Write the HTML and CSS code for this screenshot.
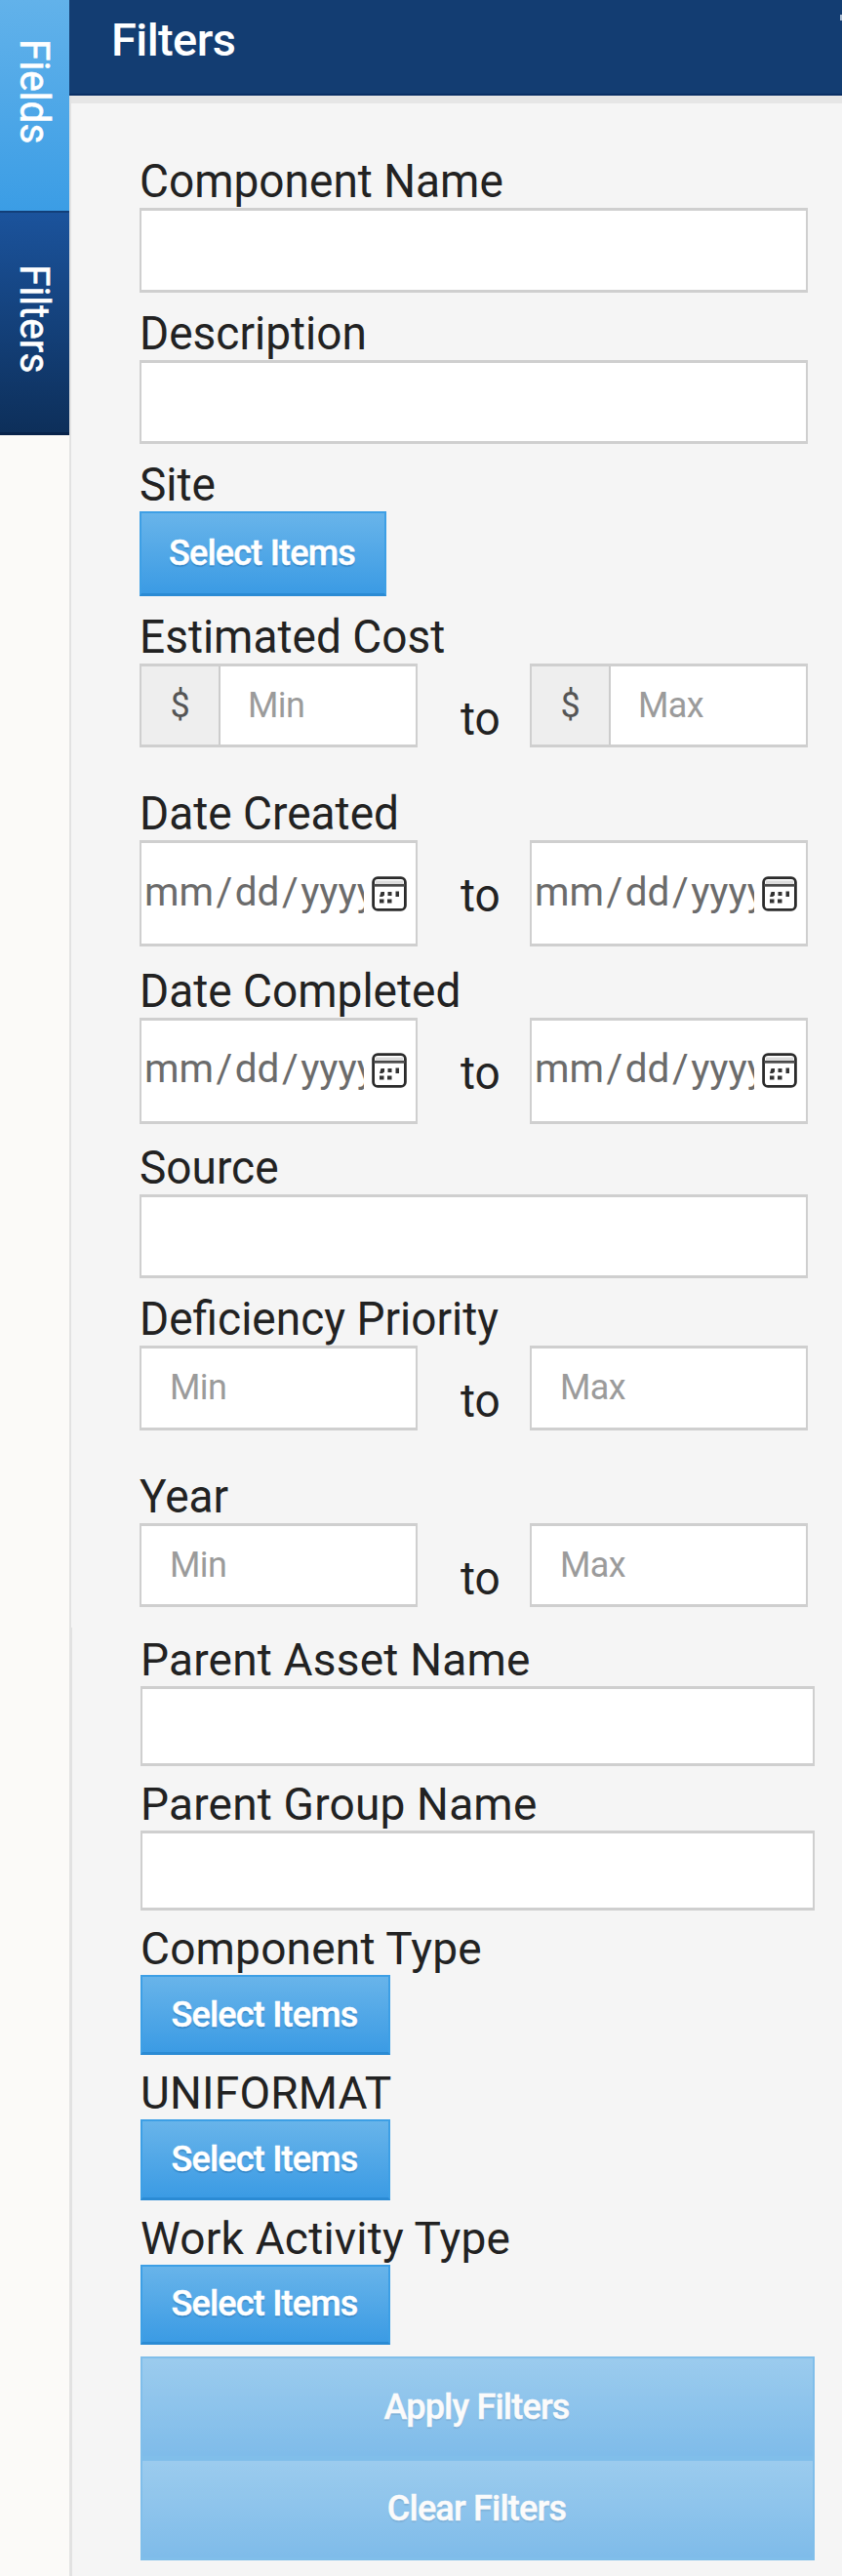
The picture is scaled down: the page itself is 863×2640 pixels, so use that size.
FILE: index.html
```html
<!DOCTYPE html>
<html lang="en">
<head>
<meta charset="utf-8">
<title>Filters</title>
<link rel="stylesheet" href="styles.css">
</head>
<body>
<svg class="defs" width="0" height="0">
  <symbol id="calendar" viewBox="0 0 36 36">
    <rect x="1.600" y="1.600" width="32.800" height="32.800" rx="4.500" fill="#fff" stroke="#2b2b2b" stroke-width="2.800"/>
    <path d="M4 4.500h28v3H4z" fill="#dcdcdc"/>
    <path d="M2 9.300h32" stroke="#4a4a4a" stroke-width="2.800"/>
    <path d="M9.500 16h3.500v3.500l-2 1.500H8zM16.500 16h4v4h-4zM24.500 15.500h3.500v5.500h-3.500zM8 23.500h4.500v4H8zM16 23.500h4.500v4H16z" fill="#333"/>
  </symbol>
</svg>
<div class="app">
  <nav class="rail">
    <a class="tab tab-fields"><span>Fields</span></a>
    <a class="tab tab-filters"><span>Filters</span></a>
  </nav>
  <main class="panel">
    <header class="head"><h1>Filters</h1><i class="head-mark"></i></header>
    <form class="form">
      <section class="group upper">
        <div class="field"><label>Component Name</label><div class="input"></div></div>
        <div class="field"><label>Description</label><div class="input"></div></div>
        <div class="field"><label>Site</label><button type="button" class="btn">Select Items</button></div>
        <div class="field range"><label>Estimated Cost</label>
          <div class="pair"><div class="input"><b class="addon">$</b><span class="ph">Min</span></div><span class="to">to</span><div class="input"><b class="addon">$</b><span class="ph">Max</span></div></div></div>
        <div class="field range date"><label>Date Created</label>
          <div class="pair"><div class="input"><span class="mask">mm<i>/</i>dd<i>/</i>yyyy</span><svg class="cal"><use href="#calendar"/></svg></div><span class="to">to</span><div class="input"><span class="mask">mm<i>/</i>dd<i>/</i>yyyy</span><svg class="cal"><use href="#calendar"/></svg></div></div></div>
        <div class="field range date"><label>Date Completed</label>
          <div class="pair"><div class="input"><span class="mask">mm<i>/</i>dd<i>/</i>yyyy</span><svg class="cal"><use href="#calendar"/></svg></div><span class="to">to</span><div class="input"><span class="mask">mm<i>/</i>dd<i>/</i>yyyy</span><svg class="cal"><use href="#calendar"/></svg></div></div></div>
        <div class="field"><label>Source</label><div class="input"></div></div>
        <div class="field range"><label>Deficiency Priority</label>
          <div class="pair"><div class="input"><span class="ph">Min</span></div><span class="to">to</span><div class="input"><span class="ph">Max</span></div></div></div>
        <div class="field range"><label>Year</label>
          <div class="pair"><div class="input"><span class="ph">Min</span></div><span class="to">to</span><div class="input"><span class="ph">Max</span></div></div></div>
      </section>
      <section class="group lower">
        <div class="field"><label>Parent Asset Name</label><div class="input"></div></div>
        <div class="field"><label>Parent Group Name</label><div class="input"></div></div>
        <div class="field"><label>Component Type</label><button type="button" class="btn">Select Items</button></div>
        <div class="field"><label>UNIFORMAT</label><button type="button" class="btn">Select Items</button></div>
        <div class="field"><label>Work Activity Type</label><button type="button" class="btn">Select Items</button></div>
        <div class="actions"><button type="button" class="btn">Apply Filters</button><button type="button" class="btn">Clear Filters</button></div>
      </section>
    </form>
  </main>
</div>
</body>
</html>
```
FILE: styles.css
```css
* { box-sizing: border-box; }
body { margin: 0; font-family: Roboto, "Liberation Sans", sans-serif; color: #222; background: #fbfaf8; }
.defs { display: block; }
.app { display: flex; width: 863px; height: 2640px; overflow: hidden; }

.rail { width: 71px; flex: none; }
.tab { display: flex; align-items: flex-start; writing-mode: vertical-rl; width: 71px; color: #fff; font-size: 40.500px; line-height: 71px; -webkit-text-stroke: .5px #fff; }
.tab span { transform: scaleX(1.06); }
.tab-fields { height: 216px; padding-top: 40px; background: linear-gradient(#62b2ea, #3b9de5); }
.tab-filters { height: 230px; padding-top: 53px; background: linear-gradient(#1b539c, #0d2f5a); border-top: 2px solid #123f79; border-bottom: 3px solid #08234a; }

.panel { flex: 1; background: #f5f5f5; display: flex; flex-direction: column; }
.head { height: 98px; flex: none; display: flex; justify-content: space-between; background: #133d72; border-bottom: 2px solid #0a2f64; padding-left: 43px; box-shadow: 0 8px 0 #e6e6e6; }
.head h1 { margin: 14px 0 0; font-size: 47px; line-height: 54px; font-weight: 500; color: #fff; letter-spacing: -0.600px; }
.head-mark { width: 2px; height: 6px; margin-top: 15px; background: #a9bbd2; }

.form { flex: 1; display: flex; flex-direction: column; }
.group { padding-left: 70px; border-left: 2px solid #e2e2e2; }
.upper { padding-top: 61.400px; padding-right: 35px; height: 1570px; --h: 86.400px; --gap: 14.950px; }
.lower { flex: 1; border-left-width: 3px; padding-top: 5.800px; padding-right: 28px; --h: 82.200px; --gap: 11.900px; }

.field { margin-bottom: var(--gap); }
.field label { display: block; height: 54px; font-size: 46px; line-height: 54px; white-space: nowrap; }
.lower label { letter-spacing: .2px; }
.upper label, .upper .to { transform: scaleY(1.05); transform-origin: 0 43px; }
.input { height: var(--h); background: #fff; border: 3px solid #cfcfcf; border-left-width: 2px; border-right-width: 2px; display: flex; align-items: center; overflow: hidden; }
.btn { display: block; width: 253px; height: calc(var(--h) + .3px); padding: 0 2px 0 0; border: 2px solid #3d9fe5; border-bottom: 3px solid #2b8bd4; background: linear-gradient(#68b4ea, #3b9be4); color: #fff; font: 500 36px/1 Roboto, "Liberation Sans", sans-serif; letter-spacing: -.8px; -webkit-text-stroke: .4px #fff; text-shadow: 0 2px 1px rgba(0, 60, 120, .25); }
.lower .field .btn { width: 256px; }

.range { --gap: 41.100px; }
.pair { display: grid; grid-template-columns: 285px 115px 285px; }
.to { font-size: 46px; line-height: 54px; padding: 30px 0 0 44px; }
.pair .to { transform-origin: 0 73px; }
.ph { padding-left: 29px; font-size: 36px; letter-spacing: -.6px; color: #9b9b9b; }
.addon { align-self: stretch; width: 81px; display: flex; align-items: center; justify-content: center; background: #eee; border-right: 2px solid #ccc; font-weight: 400; font-size: 36px; color: #555; }
.addon + .ph { padding-left: 28px; }

.date { --h: 109px; --gap: 18.400px; }
.mask { width: 228px; flex: none; overflow: hidden; padding: 0 0 4px 3px; font-size: 40.500px; color: #6b6b6b; white-space: nowrap; }
.mask i { font-style: normal; margin: 0 2.500px; }
.cal { width: 36px; height: 36px; margin-left: 8px; flex: none; }

.actions .btn { width: 100%; height: 104.500px; opacity: .63; border-bottom-color: #3d9fe5; }
```
